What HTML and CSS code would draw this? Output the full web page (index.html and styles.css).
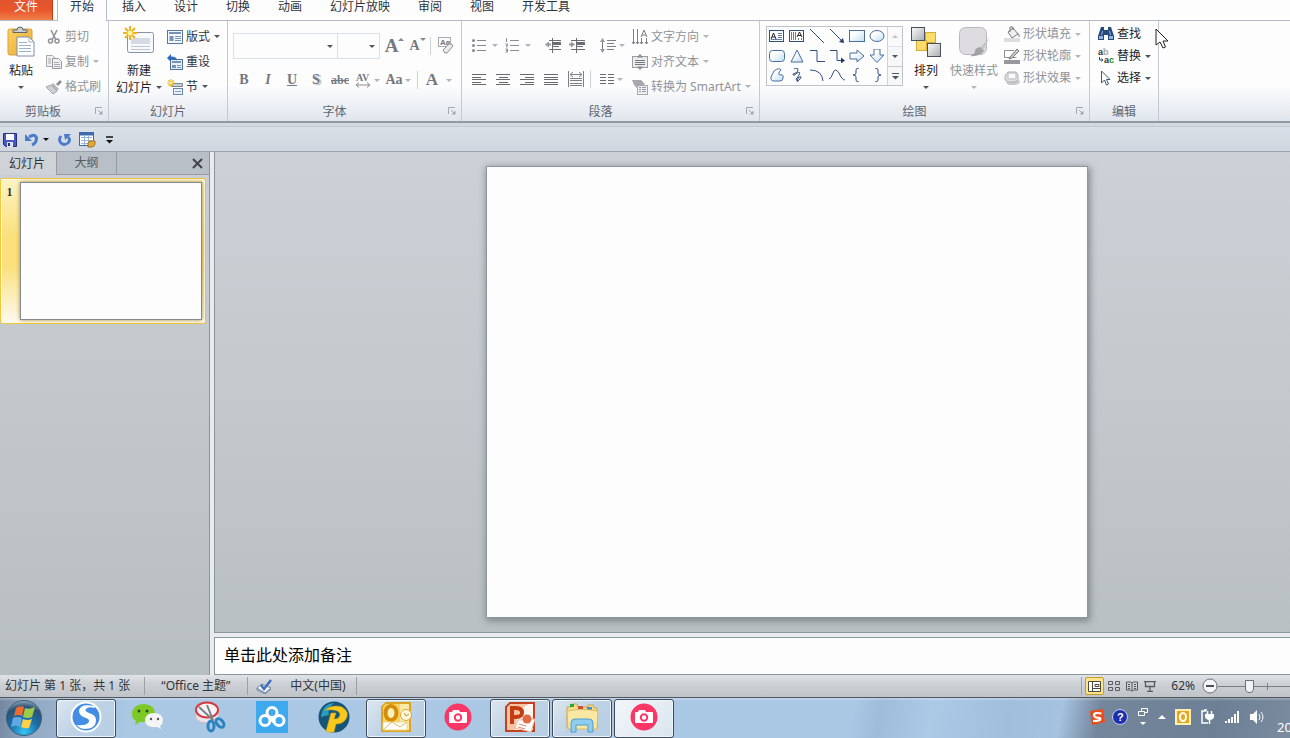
FILE: index.html
```
<!DOCTYPE html>
<html lang="zh-CN">
<head>
<meta charset="utf-8">
<title>PowerPoint</title>
<link rel="stylesheet" href="styles.css">
</head>
<body>
<svg class="defs" aria-hidden="true">
<defs>
<linearGradient id="gGray" x1="0" y1="0" x2="1" y2="1"><stop offset="0" stop-color="#fafafa"/><stop offset="1" stop-color="#a9adb3"/></linearGradient>
<linearGradient id="gPale" x1="0" y1="0" x2="1" y2="1"><stop offset="0.3" stop-color="#fff"/><stop offset="1" stop-color="#bfe0f3"/></linearGradient>
<linearGradient id="gGold" x1="0" y1="0" x2="1" y2="1"><stop offset="0" stop-color="#fbd25b"/><stop offset="1" stop-color="#e9a93a"/></linearGradient>
<radialGradient id="gOrb" cx="0.5" cy="0.9" r="0.9"><stop offset="0" stop-color="#35c5f5"/><stop offset="0.45" stop-color="#1c6ea8"/><stop offset="0.8" stop-color="#2b5273"/><stop offset="1" stop-color="#8fa9bd"/></radialGradient>
</defs>
<symbol id="launcher" viewBox="0 0 8 8"><path d="M.5 7V.5H7M3 3l3 3" fill="none" stroke="#a3a8af"/><path d="M7.5 3.5v4h-4z" fill="#a3a8af"/></symbol>
<symbol id="camera" viewBox="0 0 28 28"><circle cx="14" cy="14" r="13.5" fill="#fb3767"/><path d="M5 10q0-1 1-1h2l1-2h6l1 2h6q1 0 1 1v9q0 1-1 1H6q-1 0-1-1z" fill="#fff"/><circle cx="14" cy="14.500" r="3.2" fill="none" stroke="#fb3767" stroke-width="2"/></symbol>
<symbol id="spark" viewBox="0 0 14 14"><path d="M7 0v14M0 7h14M2 2l10 10M12 2L2 12" stroke="#f0b41c" stroke-width="2"/><circle cx="7" cy="7" r="2.5" fill="#fff3a0"/></symbol>
</svg>

<nav class="tabs">
<button class="tab file">文件</button>
<button class="tab active">开始</button>
<button class="tab">插入</button>
<button class="tab">设计</button>
<button class="tab">切换</button>
<button class="tab">动画</button>
<button class="tab">幻灯片放映</button>
<button class="tab">审阅</button>
<button class="tab">视图</button>
<button class="tab">开发工具</button>
</nav>

<div class="ribbon">
<!-- clipboard -->
<section class="group clipboard">
<div class="tools">
<button class="big">
<svg width="30" height="32" viewBox="0 0 30 32"><rect x="2" y="3" width="24" height="26" rx="2" fill="url(#gGold)" stroke="#d9a03c"/><path d="M7 6.500V4h4q0-3 3-3t3 3h4v2.500z" fill="#c9ced4" stroke="#5d646c"/><path d="M11 11h12l5 5v14H11z" fill="#fff" stroke="#7d8da3"/><path d="M23 11v5h5M13 16.500h8M13 19.500h12M13 22.500h12M13 25.500h12" fill="none" stroke="#9db1c9"/></svg>
<span>粘贴</span><i class="arr"></i></button>
<div class="col rows25">
<button class="small off"><svg width="16" height="16" viewBox="0 0 16 16"><path d="M5 1l5 10M11 1L6 11" stroke="#8f9297" stroke-width="1.6"/><circle cx="4.5" cy="12" r="2" fill="none" stroke="#8f9297" stroke-width="1.5"/><circle cx="11" cy="12" r="2" fill="none" stroke="#8f9297" stroke-width="1.5"/></svg>剪切</button>
<button class="small off"><svg width="16" height="16" viewBox="0 0 16 16"><path d="M.5 1.500h6l3 3v8h-9z" fill="#f0f0f2" stroke="#a7a9ae"/><path d="M6.500 4.500h6l3 3v7h-9z" fill="#f0f0f2" stroke="#94979d"/><path d="M2 5h3M2 7h3M2 9h3M8 8.500h5M8 10.500h6M8 12.500h6" stroke="#aaa"/></svg>复制<i class="arr"></i></button>
<button class="small off"><svg width="16" height="16" viewBox="0 0 16 16"><path d="M10 5l4-4 2 2-4 4z" fill="#8c8f94"/><path d="M7 4l6 6-2 2-6-6z" fill="#b4b6ba"/><path d="M5 6l6 6-4 3-7-7z" fill="#cfd0d3" stroke="#a2a4a8"/></svg>格式刷</button>
</div>
</div>
<h2>剪贴板</h2><button class="launch" aria-label="剪贴板选项"><svg width="8" height="8"><use href="#launcher"/></svg></button>
</section>

<!-- slides -->
<section class="group slides">
<div class="tools">
<button class="big">
<svg width="32" height="32" viewBox="0 0 32 32"><rect x="4.500" y="6.500" width="26" height="20" rx="2" fill="#f7f9fb" stroke="#8594a6"/><rect x="8" y="12" width="19" height="6" fill="#d4dbe4"/><path d="M8 20.500h19M8 23.500h19" stroke="#bcc7d4"/><use href="#spark" width="14" height="14"/></svg>
<span>新建</span><span>幻灯片<i class="arr"></i></span></button>
<div class="col rows25">
<button class="small"><svg width="16" height="16" viewBox="0 0 16 16"><rect x=".5" y="1.500" width="15" height="13" fill="#f4f8fc" stroke="#56769b"/><path d="M2 4h12" stroke="#7792b2" stroke-width="2"/><rect x="2.500" y="7" width="4" height="5" fill="#7792b2"/><path d="M8 7.500h6M8 9.500h6M8 11.500h6" stroke="#7792b2"/></svg>版式<i class="arr"></i></button>
<button class="small"><svg width="16" height="16" viewBox="0 0 16 16"><rect x="3.500" y="5.500" width="12" height="10" fill="#e8eff7" stroke="#4f6f96"/><path d="M5 8h9" stroke="#7792b2" stroke-width="2"/><rect x="5" y="11" width="4" height="3" fill="#7792b2"/><path d="M10 11.500h4M10 13.500h4" stroke="#7792b2"/><path d="M0 4l4-4v2.500q6 0 6 4-2-2-6-1.500V8z" fill="#2c6cbd"/></svg>重设</button>
<button class="small"><svg width="16" height="16" viewBox="0 0 16 16"><path d="M4.500 4.500h11v3h-11z" fill="#c9cdd4" stroke="#7c8794"/><rect x="6.500" y="9.500" width="9" height="6" fill="#e6eef6" stroke="#6c89aa"/><path d="M8 12.500h6" stroke="#8ba4c0"/><use href="#spark" width="8" height="8"/></svg>节<i class="arr"></i></button>
</div>
</div>
<h2>幻灯片</h2>
</section>

<!-- font -->
<section class="group font">
<div class="fontgrid">
<div class="line">
<select class="face" aria-label="字体"><option></option></select><select class="size" aria-label="字号"><option></option></select>
<button class="grow" aria-label="增大字号"><b>A</b><sup class="tri up"></sup></button>
<button class="shrink" aria-label="减小字号"><b>A</b><sup class="tri"></sup></button>
<i class="bar"></i>
<button aria-label="清除格式"><svg width="18" height="18" viewBox="0 0 18 18"><rect x="1.500" y=".500" width="12" height="9" fill="#fafafa" stroke="#aaaab0"/><text x="3" y="8" class="tiny">Aa</text><path d="M6 13l6-6q3-1 4 2l-6 7q-3 1-4-3z" fill="#eceaec" stroke="#8e8c92"/></svg></button>
</div>
<div class="line">
<button class="ch"><b>B</b></button>
<button class="ch"><b><em>I</em></b></button>
<button class="ch"><b><u>U</u></b></button>
<button class="ch shadow"><b>S</b></button>
<button class="ch strike"><b><s>abc</s></b></button>
<button class="ch av"><svg width="17" height="17" viewBox="0 0 17 17"><text x="1" y="9" class="avt">AV</text><path d="M1 13h14M4 10.500L1 13l3 2.500M12 10.500l3 2.500-3 2.500" fill="none" stroke="#888b90"/></svg><i class="arr"></i></button>
<button class="ch aa">Aa<i class="arr"></i></button>
<i class="bar"></i>
<button class="ch color"><b>A</b><i class="arr"></i></button>
</div>
</div>
<h2>字体</h2><button class="launch" aria-label="字体选项"><svg width="8" height="8"><use href="#launcher"/></svg></button>
</section>

<!-- paragraph -->
<section class="group para">
<div class="tools">
<div class="paragrid">
<div class="line">
<button class="ic"><svg width="15" height="15" viewBox="0 0 15 15"><path d="M5 2.500h9M5 7.500h9M5 12.500h9" stroke="#85888d"/><g fill="#85888d"><circle cx="1.500" cy="2.500" r="1.500"/><circle cx="1.500" cy="7.500" r="1.500"/><circle cx="1.500" cy="12.500" r="1.500"/></g></svg><i class="arr"></i></button>
<button class="ic"><svg width="15" height="15" viewBox="0 0 15 15"><path d="M5 2.500h9M5 7.500h9M5 12.500h9" stroke="#8a8d92"/><path d="M1 .5h.5V4M.5 6h2v1.500h-1V9h1M.5 11h2v3h-2M1 12.500h1" fill="none" stroke="#85888d"/></svg><i class="arr"></i></button>
<i class="bar"></i>
<button class="ic"><svg width="17" height="15" viewBox="0 0 17 15"><path d="M4 2.500h12M8 8.500h6M4 11.500h12M7.500 0v15" stroke="#6a6d72"/><path d="M8 4h8v3H8z" fill="#6a6d72"/><path d="M0 6.500l4-3v2h2v2H4v2z" fill="#96999e"/></svg></button>
<button class="ic"><svg width="17" height="15" viewBox="0 0 17 15"><path d="M2 2.500h14M8 8.500h6M2 11.500h14M7.500 0v15" stroke="#6a6d72"/><path d="M8 4h8v3H8z" fill="#6a6d72"/><path d="M6 6.500l-4-3v2H0v2h2v2z" fill="#96999e"/></svg></button>
<i class="bar"></i>
<button class="ic"><svg width="16" height="17" viewBox="0 0 16 17"><path d="M7 3.500h9M7 6.500h7M7 9.500h9M7 12.500h7M2.500 2v13" stroke="#7c7f84"/><path d="M0 5l2.500-4L5 5zM0 12l2.500 4L5 12z" fill="#96999e"/></svg><i class="arr"></i></button>
</div>
<div class="line">
<button class="al"><svg width="15" height="13" viewBox="0 0 15 13"><path d="M0 1.500h14M0 4.500h9M0 6.500h14M0 9.500h9M0 11.500h14" stroke="#66696e"/></svg></button>
<button class="al"><svg width="15" height="13" viewBox="0 0 15 13"><path d="M0 1.500h14M3 4.500h9M0 6.500h14M3 9.500h9M0 11.500h14" stroke="#66696e"/></svg></button>
<button class="al"><svg width="15" height="13" viewBox="0 0 15 13"><path d="M0 1.500h14M5 4.500h9M0 6.500h14M5 9.500h9M0 11.500h14" stroke="#66696e"/></svg></button>
<button class="al"><svg width="15" height="13" viewBox="0 0 15 13"><path d="M0 1.500h14M0 4.500h14M0 6.500h14M0 9.500h14M0 11.500h14" stroke="#66696e"/></svg></button>
<button class="al"><svg width="17" height="16" viewBox="0 0 17 16"><path d="M.5 0v16M15.500 0v16M2 7.500h12M2 9.500h12M2 12.500h12M2 14.500h12M3 3.500h10M5 1L2 3.500 5 6M11 1l3 2.500L11 6" fill="none" stroke="#7b7e83"/></svg></button>
<i class="bar"></i>
<button class="ic"><svg width="14" height="12" viewBox="0 0 14 12"><path d="M0 1.500h6M0 4.500h6M0 7.500h6M0 10.500h6M8 1.500h6M8 4.500h6M8 7.500h6M8 10.500h6" stroke="#66696e"/></svg><i class="arr"></i></button>
</div>
</div>
<div class="col rows25">
<button class="small off"><svg width="16" height="16" viewBox="0 0 16 16"><path d="M1.500 0v15M5.500 0v15M9.500 9v6M14.500 9v6M0 13l1.500 2L3 13M4 13l1.500 2L7 13M8 13l1.500 2 1.500-2M13 13l1.500 2 1.500-2M9 8l3-7 3 7M10 6h4" fill="none" stroke="#7b7e83"/></svg>文字方向<i class="arr"></i></button>
<button class="small off"><svg width="16" height="16" viewBox="0 0 16 16"><rect x=".5" y="2.500" width="15" height="11" fill="#ececee" stroke="#9b9da2"/><path d="M3 6.500h10M3 8.500h10M3 10.500h10" stroke="#77797e"/><path d="M5 3.500L8 0l3 3.500zM5 12.500L8 16l3-3.500z" fill="#85888e"/></svg>对齐文本<i class="arr"></i></button>
<button class="small off"><svg width="16" height="16" viewBox="0 0 16 16"><path d="M0 1h9l4 4-3 2 4 2H5L2 6z" fill="#a6a8ad"/><rect x="5.500" y="6.500" width="10" height="9" fill="#f0eff1" stroke="#a6a8ad"/><path d="M7 8.500h2M10 8.500h4M7 10.500h2M10 10.500h4M7 12.500h2M10 12.500h4" stroke="#95989e"/></svg>转换为 SmartArt<i class="arr"></i></button>
</div>
</div>
<h2>段落</h2><button class="launch" aria-label="段落选项"><svg width="8" height="8"><use href="#launcher"/></svg></button>
</section>

<!-- drawing -->
<section class="group draw">
<div class="tools">
<div class="gallery">
<div class="shapes">
<button><svg viewBox="0 0 16 14"><rect x=".5" y="1.500" width="14" height="11" fill="#fff" stroke="#2f4f7c"/><path d="M2 10l2.500-6L7 10M3 8h3" fill="none" stroke="#222" /><path d="M9 4.500h4M9 6.500h4M2 10.500h11M9 8.500h4" fill="none" stroke="#5f7fa8"/></svg></button>
<button><svg viewBox="0 0 16 14"><rect x=".5" y="1.500" width="14" height="11" fill="#fff" stroke="#2f4f7c"/><path d="M2.500 3v8M4.500 3v8M6.500 3v8M9.500 9v2M12.500 9v2" fill="none" stroke="#5f7fa8"/><path d="M8 8l2.500-5L13 8M9 6.500h3" fill="none" stroke="#222"/></svg></button>
<button><svg viewBox="0 0 16 14"><path d="M1 0l14 14" stroke="#2f4f7c"/></svg></button>
<button><svg viewBox="0 0 16 14"><path d="M1 0l12 12" stroke="#2f4f7c"/><path d="M15 14l-5-1 4-4z" fill="#1f3d68"/></svg></button>
<button><svg viewBox="0 0 16 14"><rect x=".5" y="1.500" width="15" height="11" fill="url(#gPale)" stroke="#4a6d9c"/></svg></button>
<button><svg viewBox="0 0 16 14"><ellipse cx="8" cy="7" rx="7" ry="5.500" fill="url(#gPale)" stroke="#4a6d9c"/></svg></button>
<button><svg viewBox="0 0 16 14"><rect x=".5" y="1.500" width="15" height="11" rx="3" fill="url(#gPale)" stroke="#4a6d9c"/></svg></button>
<button><svg viewBox="0 0 16 14"><path d="M8 1l6 12H2z" fill="url(#gPale)" stroke="#4a6d9c"/></svg></button>
<button><svg viewBox="0 0 16 14"><path d="M1 1.500h7v11h8" fill="none" stroke="#2f4f7c"/></svg></button>
<button><svg viewBox="0 0 16 14"><path d="M1 1.500h7v10h6" fill="none" stroke="#2f4f7c"/><path d="M12 8.500l4 3-4 3z" fill="#1f3d68"/></svg></button>
<button><svg viewBox="0 0 16 14"><path d="M1 4h7V1l7 6-7 6v-3H1z" fill="url(#gPale)" stroke="#4a6d9c"/></svg></button>
<button><svg viewBox="0 0 16 14"><path d="M5 0h6v6h4l-7 7.500L1 6h4z" fill="url(#gPale)" stroke="#4a6d9c"/></svg></button>
<button><svg viewBox="0 0 16 14"><path d="M2 9l3-6q5-4 7-1-4 4-1 5 4-1 3 3 0 3-3 3H4q-3-1-2-4z" fill="url(#gPale)" stroke="#4a6d9c"/></svg></button>
<button><svg viewBox="0 0 16 14"><path d="M5 1q4-2 4 1t-5 4q0 3 4-1 4-2 2 2T7 11q1 4 4 0t-2-1q-1 4 0 4" fill="none" stroke="#2f4f7c"/></svg></button>
<button><svg viewBox="0 0 16 14"><path d="M1 2q12 0 13 11" fill="none" stroke="#2f4f7c"/></svg></button>
<button><svg viewBox="0 0 16 14"><path d="M0 11q2 0 4-6t6 0q3 7 6 7" fill="none" stroke="#2f4f7c"/></svg></button>
<button><svg viewBox="0 0 16 14"><path d="M10 0Q7 0 7 2v3q0 2-3 2 3 0 3 2v3q0 2 3 2" fill="none" stroke="#2f4f7c"/></svg></button>
<button><svg viewBox="0 0 16 14"><path d="M6 0q3 0 3 2v3q0 2 3 2-3 0-3 2v3q0 2-3 2" fill="none" stroke="#2f4f7c"/></svg></button>
</div>
<div class="scroll">
<button class="dim" aria-label="上"><i class="tri up"></i></button>
<button aria-label="下"><i class="arr"></i></button>
<button class="more" aria-label="更多"><svg width="7" height="7" viewBox="0 0 7 7"><path d="M0 .5h7" stroke="#50555c"/><path d="M0 3h7L3.500 6.500z" fill="#50555c"/></svg></button>
</div>
</div>
<button class="big arrange">
<svg width="32" height="32" viewBox="0 0 32 32"><rect x="15.500" y="6.500" width="10" height="10" fill="#fbdc67" stroke="#d6a93a"/><rect x="6.500" y="14.500" width="10" height="10" fill="#fbdc67" stroke="#d6a93a"/><rect x="1.500" y="1.500" width="13" height="13" fill="url(#gGray)" stroke="#47505c"/><rect x="17.500" y="17.500" width="13" height="13" fill="url(#gGray)" stroke="#47505c"/></svg>
<span>排列</span><i class="arr"></i></button>
<button class="big off quick">
<svg width="32" height="32" viewBox="0 0 32 32"><rect x="1.500" y="1.500" width="27" height="27" rx="6" fill="#dedce0" stroke="#bab8be"/><path d="M31 12L22 22l3 3z" fill="#c6c3c8"/><path d="M22 21l4 4q-4 6-14 5 5-2 5-5t5-4z" fill="#a4a1a7"/></svg>
<span>快速样式</span><i class="arr"></i></button>
<div class="col rows22">
<button class="small off"><svg width="16" height="16" viewBox="0 0 16 16"><path d="M4 6l5-4 5 6-6 4z" fill="#eee" stroke="#77797e"/><path d="M6 6V1h3v3M13 7q3 1 2 4" fill="none" stroke="#77797e"/><path d="M0 12h16v4H0z" fill="#dcdde0"/></svg>形状填充<i class="arr"></i></button>
<button class="small off"><svg width="16" height="16" viewBox="0 0 16 16"><path d="M10 2.500H.5v7h12" fill="none" stroke="#8e9095"/><path d="M6 9l7-8 2 2-7 7-3 1z" fill="#c9cacc" stroke="#77797e"/><path d="M0 12h16v4H0z" fill="#97999e"/></svg>形状轮廓<i class="arr"></i></button>
<button class="small off"><svg width="16" height="16" viewBox="0 0 16 16"><path d="M4 10h11l1 3-4 2H5l-3-2z" fill="#c9cacd"/><path d="M1 6l3-4h8l2 3v5l-3 2H4l-3-2z" fill="#dfdfe2" stroke="#aeb0b4"/><rect x="4" y="3" width="8" height="6" rx="1" fill="#f9f9fa" stroke="#bbb"/></svg>形状效果<i class="arr"></i></button>
</div>
</div>
<h2>绘图</h2><button class="launch" aria-label="绘图选项"><svg width="8" height="8"><use href="#launcher"/></svg></button>
</section>

<!-- editing -->
<section class="group edit">
<div class="tools">
<div class="col rows22">
<button class="small"><svg width="16" height="16" viewBox="0 0 16 16"><path d="M3 1h3v3h4V1h3l3 9v4h-6V9H6v5H0v-4z" fill="#28497c"/><path d="M1 10h4v3H1zM11 10h4v3h-4zM4 5l-1 4h1l1-4zM11 5l1 4h1l-1-4z" fill="#8fb3e0"/></svg>查找</button>
<button class="small"><svg width="16" height="16" viewBox="0 0 16 16"><text x="0" y="7" class="rep">a<tspan fill="#a5a5a5">b</tspan></text><text x="6" y="15" class="rep">a<tspan fill="#178a17">c</tspan></text><path d="M1.500 9v3H5M3.500 10.500L5 12l-1.500 1.500" fill="none" stroke="#28497c"/></svg>替换<i class="arr"></i></button>
<button class="small"><svg width="16" height="16" viewBox="0 0 16 16"><path d="M3.500 1v12l3-3 2 5 2-1-2-4.500h3.500z" fill="#fff" stroke="#3f5677"/></svg>选择<i class="arr"></i></button>
</div>
</div>
<h2>编辑</h2>
</section>
</div>

<div class="qat">
<button aria-label="保存"><svg width="14" height="14" viewBox="0 0 14 14"><path d="M.5.500h13v13h-11l-2-2z" fill="#4a57c4" stroke="#27307c"/><rect x="3" y="1" width="8" height="6" fill="#fff"/><rect x="4" y="9" width="6" height="5" fill="#dfe4f2"/><rect x="5" y="10" width="2" height="3" fill="#222c70"/></svg></button>
<button class="undo" aria-label="撤消"><svg width="14" height="14" viewBox="0 0 14 14"><path d="M4 4q6-4 7.500 1 0 5-4.500 7" fill="none" stroke="#4a7bcb" stroke-width="3"/><path d="M0 1v7h7z" fill="#4a7bcb"/></svg><i class="arr"></i></button>
<button class="redo" aria-label="重复"><svg width="14" height="14" viewBox="0 0 14 14"><path d="M3 3q-3 4 0 7t7 0q3-3 0-6" fill="none" stroke="#4a7bcb" stroke-width="2.800"/><path d="M6 1h7L7 7z" fill="#4a7bcb"/></svg></button>
<button aria-label="表格"><svg width="17" height="16" viewBox="0 0 17 16"><rect x=".5" y=".500" width="14" height="13" fill="#fff" stroke="#3e6bb0"/><path d="M0 2h15" stroke="#3e6bb0" stroke-width="3"/><path d="M2 5.500h11M2 8.500h11M2 11.500h8M5.500 4v9M9.500 4v9" stroke="#9db5d6"/><path d="M9 11q0-2 3-2h4v3q-1 3-3 3H9z" fill="#e0a93b" stroke="#a4741c"/></svg></button>
<button class="custom" aria-label="自定义快速访问工具栏"><svg width="7" height="8" viewBox="0 0 7 8"><path d="M0 1h7" stroke="#111" stroke-width="1.500"/><path d="M0 4h7L3.500 7.500z" fill="#111"/></svg></button>
</div>

<main>
<aside>
<div class="panetabs"><button class="on">幻灯片</button><button>大纲</button><button class="close" aria-label="关闭"><svg width="11" height="11" viewBox="0 0 11 11"><path d="M1 1l9 9M10 1l-9 9" stroke="#3f444a" stroke-width="2"/></svg></button></div>
<button class="thumb"><span>1</span><span class="mini"></span></button>
</aside>
<div class="work">
<div class="stage"><div class="slide"></div></div>
<textarea class="notes" aria-label="备注">单击此处添加备注</textarea>
</div>
</main>

<footer class="status">
<span class="cell">幻灯片 第 1 张，共 1 张</span>
<span class="cell theme">“Office 主题”</span>
<button class="cell lang"><svg width="17" height="15" viewBox="0 0 17 15"><path d="M1 9l5-4 9 4-6 5z" fill="#f5f8fc" stroke="#7286a3"/><path d="M1 9v2l8 4 6-5" fill="none" stroke="#7286a3"/><path d="M5 6l3 4 7-9" fill="none" stroke="#3f6fc0" stroke-width="2.500"/></svg>中文(中国)</button>
<div class="views">
<button class="on" aria-label="普通视图"><svg width="13" height="11" viewBox="0 0 13 11"><path d="M.5.500h12v10H.5zM4.500.500v10M4.500 7.500h8M7 3.500h4v2H7z" fill="#fff" stroke="#4c4a3e"/></svg></button>
<button aria-label="幻灯片浏览"><svg width="12" height="11" viewBox="0 0 12 11"><path d="M.5.500h4v3h-4zM7.500.500h4v3h-4zM.5 6.500h4v3h-4zM7.500 6.500h4v3h-4z" fill="none" stroke="#585b60"/></svg></button>
<button aria-label="阅读视图"><svg width="12" height="11" viewBox="0 0 12 11"><path d="M.5 1h4l1.500 1 1.500-1h4v8h-4L6 10.500 4.500 9h-4zM6 2v8M2 3.500h2M2 5.500h2M2 7.500h2M8 3.500h2M8 5.500h2M8 7.500h2" fill="none" stroke="#585b60"/></svg></button>
<button aria-label="幻灯片放映"><svg width="12" height="11" viewBox="0 0 12 11"><path d="M0 .5h12M1.500.500v5h9v-5M6 6v4M3 10.500h6" fill="none" stroke="#585b60" stroke-width="1.300"/></svg></button>
</div>
<button class="pct">62%</button>
<button class="minus" aria-label="缩小"><svg width="16" height="16" viewBox="0 0 16 16"><circle cx="8" cy="8" r="7" fill="#f4f5f6" stroke="#6c7076"/><path d="M4 8h8" stroke="#4c5056" stroke-width="2"/></svg></button>
<input class="zoom" type="range" min="0" max="100" value="43" aria-label="显示比例">
</footer>

<div class="taskbar">
<button class="start" aria-label="开始"><svg width="38" height="38" viewBox="0 0 38 38"><circle cx="19" cy="19" r="17.500" fill="url(#gOrb)" stroke="#3f5f7a"/><path d="M11 9q4-3 8-1l-2 9q-4-2-8 0z" fill="#ee6a31"/><path d="M20 9q4 2 10-1l-3 10q-4 2-9 0z" fill="#9ccb4a"/><path d="M8 19q4-2 9 0l-2 9q-4-3-9 0z" fill="#62a9e4"/><path d="M18 20q4 2 9 0l-3 9q-4 1-8-1z" fill="#fbd14a"/></svg></button>
<button class="app open"><svg width="32" height="32" viewBox="0 0 32 32"><circle cx="16" cy="16" r="15.500" fill="#fff"/><circle cx="16" cy="16" r="13.500" fill="#448de4"/><path d="M24 5Q10 2 9 10q0 5 7 7 5 2 2 5-3 3-12 2 3 3 8 4 12 0 12-9 0-5-7-7-5-2-3-4 2-3 9-1z" fill="#fff"/></svg></button>
<button class="app"><svg width="34" height="30" viewBox="0 0 34 30"><path d="M13 2C6 2 1 6 1 12q0 5 4 7l-1 4 5-3h4q11-1 11-9T13 2z" fill="#7cc928"/><circle cx="8" cy="9" r="1.500" fill="#304d12"/><circle cx="16" cy="9" r="1.500" fill="#304d12"/><path d="M23 11q9 0 9 8 0 3-3 5l1 3-4-2q-11 1-12-6 0-8 9-8z" fill="#f4f4f4"/><circle cx="20" cy="17" r="1.200" fill="#555"/><circle cx="27" cy="17" r="1.200" fill="#555"/></svg></button>
<button class="app"><svg width="32" height="32" viewBox="0 0 32 32"><path d="M2 9v9q9 8 22-1V8z" fill="#e9e4ea" stroke="#c9c2cc"/><ellipse cx="13" cy="9" rx="11" ry="7.500" fill="#f5f3f6" stroke="#d9383e" stroke-width="2"/><path d="M5 6l14 13M13 4l6 15" stroke="#7b7f86" stroke-width="2"/><ellipse cx="17" cy="25" rx="3" ry="5" fill="none" stroke="#2b84bd" stroke-width="3"/><ellipse cx="26" cy="22" rx="3" ry="5" fill="none" stroke="#2b84bd" stroke-width="3" transform="rotate(-40 26 22)"/></svg></button>
<button class="app"><svg width="32" height="32" viewBox="0 0 32 32"><rect width="32" height="32" fill="#3fa9f0"/><g fill="none" stroke="#fff" stroke-width="3"><circle cx="16" cy="11.500" r="5"/><circle cx="9" cy="19.500" r="5"/><circle cx="23" cy="19.500" r="5"/></g><path d="M13 16l6 6" stroke="#fff" stroke-width="3"/></svg></button>
<button class="app"><svg width="32" height="32" viewBox="0 0 32 32"><circle cx="16" cy="16" r="15.500" fill="#175577"/><path d="M3 16Q4 3 16 2q-7 6-5 12z" fill="#2b9cbb"/><path d="M7 9q8-6 17-3 8 5 4 12-3 5-10 5l-2 8q-5 1-8-1l5-18h5l-2 6q6 0 6-5-1-5-15-4z" fill="#f8c81c" stroke="#d9a010" stroke-width=".5"/></svg></button>
<button class="app open"><svg width="32" height="32" viewBox="0 0 32 32"><path d="M6 2h24v28H2V6z" fill="#fbe9a8" stroke="#dba422" stroke-width="2"/><path d="M3 7q1-4 5-4h12v18H3z" fill="#f7d45e"/><ellipse cx="11" cy="12" rx="5.500" ry="7" fill="#fff1b8" stroke="#d58c0a" stroke-width="4"/><path d="M3 21h24v8H3z" fill="#fff" stroke="#ecd48b"/><path d="M3 29l9-8 8 5 7-5" fill="none" stroke="#e0bd5c"/><circle cx="26" cy="14" r="5.500" fill="#fff8dd" stroke="#dca73c"/><path d="M24 12l2 3 3-2" fill="none" stroke="#c98d1e"/></svg></button>
<button class="app"><svg width="28" height="28"><use href="#camera"/></svg></button>
<button class="app open"><svg width="32" height="32" viewBox="0 0 32 32"><path d="M6 2h24v28H2V6z" fill="#fdf4ec" stroke="#c5401c" stroke-width="2"/><path d="M3 8q1-5 6-5h16q-12 4-14 26H3z" fill="#f7c3a2"/><path d="M8 23V7h4q6 0 6 4.500T12 16H8" fill="none" stroke="#c43b14" stroke-width="4"/><path d="M14 19l17-1-4 13-16-4z" fill="#fff" stroke="#e3b6a2"/><circle cx="23" cy="18" r="4.500" fill="#e06a43"/><path d="M15 23l7 2M14 26l7 2" stroke="#d98b6d"/></svg></button>
<button class="app open"><svg width="34" height="32" viewBox="0 0 34 32"><path d="M2 6h4l1-3h5l1 3h10V4h5l1 3h3v20H2z" fill="#f4dd8b" stroke="#c9a54a"/><path d="M5 3h4v3H5z" fill="#22a83c"/><path d="M13 5h5v3h-5z" fill="#d84a36"/><path d="M22 6h5v3h-5z" fill="#3c8fd6"/><path d="M2 10q14-3 31 0l-1 18H3z" fill="#f9e7a4" stroke="#d9b964"/><path d="M6 31v-9q0-4 4-4h14q4 0 4 4v9h-5v-7H11v7z" fill="#8fcdee" stroke="#4e9dcb"/></svg></button>
<button class="app open bright"><svg width="28" height="28"><use href="#camera"/></svg></button>

<div class="tray">
<svg width="16" height="16" viewBox="0 0 16 16"><path d="M1 2l13-2 2 13-13 3z" fill="#ee4b1b"/><path d="M12.500 4.500Q5 3 5 6t6 3q2 3-7 3" fill="none" stroke="#fff" stroke-width="2.200"/></svg>
<svg width="16" height="16" viewBox="0 0 16 16"><circle cx="8" cy="8" r="7.500" fill="#1c2fb0" stroke="#c4cdea"/><text x="5" y="12" class="q">?</text></svg>
<svg width="12" height="18" viewBox="0 0 12 18"><path d="M4.500 3V.500h6v4H8M1.500 3.500h6v4h-6z" fill="none" stroke="#fff"/><path d="M3 14h6l-3 3z" fill="#fff"/></svg>
<svg width="8" height="6" viewBox="0 0 8 6"><path d="M0 5l4-4 4 4z" fill="#fff"/></svg>
<svg width="16" height="16" viewBox="0 0 16 16"><rect x="1" y="1" width="14" height="14" fill="#e9a91e" stroke="#fff0b5" stroke-width="2"/><ellipse cx="8" cy="8" rx="3" ry="4" fill="none" stroke="#fff" stroke-width="2"/></svg>
<svg width="15" height="16" viewBox="0 0 15 16"><path d="M6 2H2v12h6M4 1h3" fill="none" stroke="#fff" stroke-width="1.500"/><path d="M7.500 2v3M11.500 2v3M9.500 10v5" stroke="#fff" stroke-width="1.500"/><path d="M5 5h9v3q-1 3-4.500 3T5 8z" fill="#fff"/></svg>
<svg width="16" height="14" viewBox="0 0 16 14"><path d="M1 11h2v2H1zM4 9h2v4H4zM7 7h2v6H7zM10 4h2v9h-2zM13 1h2v12h-2z" fill="#fff"/></svg>
<svg width="16" height="16" viewBox="0 0 16 16"><path d="M1 5h3l4-4v14l-4-4H1z" fill="#fff"/><path d="M10 5q2 3 0 6M12 3q4 5 0 10" fill="none" stroke="#fff"/></svg>
<span class="clock">20</span>
</div>
</div>

<svg class="cursor" width="14" height="22" viewBox="0 0 14 22"><path d="M1 1v16l4-3 3 6 2.500-1L8 13h5z" fill="#fff" stroke="#222"/></svg>
</body>
</html>
```

FILE: styles.css
```
* {box-sizing:border-box;}
html, body {height:100%;}
body {margin:0;display:flex;flex-direction:column;overflow:hidden;background:#fdfdfe;color:#30343a;font-family:"Noto Sans","Noto Sans CJK SC",sans-serif;font-size:12px;line-height:16px;}
button {font:inherit;color:inherit;background:none;border:0;margin:0;padding:0;white-space:nowrap;}
svg {display:block;flex:none;}
h2 {margin:0;font-size:12px;font-weight:normal;line-height:18px;height:18px;text-align:center;color:#5f6670;}
.defs {position:absolute;width:0;height:0;}

.arr {display:inline-block;flex:none;width:0;height:0;border:3px solid transparent;border-top-color:#50555c;border-bottom:0;}
.off .arr, .para .arr, .font button .arr {border-top-color:#b0b3b8;}
.tri {display:inline-block;width:0;height:0;border:3px solid transparent;border-top-color:#85888e;border-bottom:0;}
.tri.up {border-top:0;border-bottom:3px solid #85888e;}
.bar {width:1px;height:18px;background:#cdd3da;}

/* tabs */
.tabs {display:flex;flex:none;height:21px;border-bottom:1px solid #b4bcc8;}
.tab {height:20px;padding:0 14px 6px;line-height:14px;}
.file {width:53px;margin-right:4px;padding:0 0 6px;color:#fff;background:linear-gradient(#e2532f,#e8562a 50%,#f0804a);border-right:1px solid #c23c10;}
.tab.active {height:21px;width:50px;padding:0 0 7px;margin-right:1px;background:#fdfdfe;border:solid #b4bcc8;border-width:0 1px;}

/* ribbon */
.ribbon {display:flex;flex:none;height:102px;background:linear-gradient(#fdfdfe,#fdfdfe 64%,#e0e6ed);border-bottom:2px solid #9299a4;}
.group {position:relative;flex:none;display:flex;flex-direction:column;justify-content:space-between;border-right:1px solid #c3cad3;}
.tools {display:flex;height:79px;padding-top:3px;}
.clipboard {width:109px;}
.clipboard h2 {padding-right:22px;}
.slides {width:119px;}
.font {width:234px;}
.font h2 {padding-right:20px;}
.para {width:298px;}
.para h2 {padding-right:20px;}
.draw {width:330px;}
.draw h2 {padding-right:20px;}
.edit {width:69px;}
.launch {position:absolute;right:5px;bottom:6px;}
.big {display:flex;flex-direction:column;align-items:center;}
.big svg {margin:2px 0 4px;}
.big > .arr {margin-top:7px;}
.big span .arr {margin:0 0 3px 4px;}
.big span {line-height:17px;}
.big, .edit .small {color:#1e2227;}
.col {display:flex;flex-direction:column;}
.small {display:flex;align-items:center;gap:3px;}
.small .arr {margin-left:1px;}
.rows25 .small {height:25px;}
.rows22 .small {height:22px;}
.off, .big.off {color:#8f9398;}
.clipboard .big {width:42px;margin-right:4px;}
.slides .big {width:46px;margin:0 5px 0 7px;}

/* font group */
.line {display:flex;align-items:center;height:34px;}
.fontgrid {padding:8px 0 0 4px;}
select {appearance:none;height:26px;border:1px solid #d7e1ec;border-radius:0;background:#fdfdfe url("data:image/svg+xml,%3Csvg xmlns='http://www.w3.org/2000/svg' width='6' height='3'%3E%3Cpath d='M0 0h6L3 3z' fill='%2350555c'/%3E%3C/svg%3E") no-repeat right 4px center;}
.face {width:105px;margin-left:1px;}
.size {width:43px;margin-left:-1px;}
.font b, .ch {font-family:"Liberation Serif",serif;color:#75787e;}
.grow, .shrink {display:flex;width:23px;justify-content:center;}
.grow {margin-left:3px;}
.grow b {font-size:19px;}
.shrink b {font-size:14px;}
.font .line:first-child .bar {margin:0 6px 0 1px;}
.ch {width:24px;font-size:14px;}
.shadow b {text-shadow:2px 1px 1px #b5b7bb;}
.strike {font-size:12px;}
.av, .aa, .color {display:flex;align-items:center;justify-content:center;gap:2px;}
.av {width:30px;}
.aa {width:32px;font-weight:bold;}
.font .line + .line .bar {margin:0 7px 0 3px;}
.color {width:28px;gap:8px;}
.color b {font-size:17px;}
.tiny {font:bold 8px "Liberation Sans",sans-serif;fill:#77797e;}
.avt {font:bold 10px "Liberation Serif",serif;fill:#75787e;}

/* paragraph group */
.paragrid {width:161px;margin-right:9px;padding:4px 0 0 10px;}
.paragrid .line {gap:9px;}
.paragrid .line:first-child {gap:7px;}
.ic {display:flex;align-items:center;gap:5px;}
.paragrid .ic:last-child {gap:3px;}
.al + .bar {margin-left:-4px;}

/* drawing group */
.gallery {display:flex;width:137px;height:60px;margin:2px 8px 0 6px;border:1px solid #c0c4ca;}
.shapes {display:grid;flex:1;grid-template-columns:repeat(6,20px);align-content:space-between;padding:0 0 1px;}
.shapes button {height:18px;padding:2px;}
.shapes svg {width:16px;height:14px;}
.scroll {width:15px;border-left:1px solid #cfd3d8;}
.scroll button {display:flex;align-items:center;justify-content:center;width:100%;height:20px;border-bottom:1px solid #c6cad0;background:#f6f7f9;}
.scroll .dim {opacity:.5;}
.scroll .more {height:18px;border-bottom:0;}
.arrange {width:30px;}
.quick {width:50px;margin:0 5px 0 8px;}
.draw .rows22, .edit .rows22 {margin-top:-1px;}
.edit .col {padding-left:8px;}
.rep {font:bold 9px "Liberation Sans",sans-serif;fill:#333;}

/* quick access toolbar */
.qat {display:flex;flex:none;align-items:center;gap:7px;height:29px;padding:2px 3px 0;border-top:3px solid #d3d9e1;border-bottom:1px solid #9aa2ad;background:linear-gradient(#a8b0bb,#dae0e8 1px,#cfd6df);}
.undo {display:flex;align-items:center;gap:4px;margin-left:1px;}
.qat .arr {border-top-color:#111;}
.redo {margin-left:2px;}
.custom {margin-left:3px;}

/* work area */
main {display:flex;flex:1;min-height:0;background:#e9ecef;}
aside {width:210px;flex:none;background:linear-gradient(#cbcfd5,#b7bec1);border-right:1px solid #8d949c;}
.panetabs {display:flex;height:23px;}
.panetabs button {width:60px;border:solid #959ca5;border-width:0 1px 1px 0;background:#b9bfc6;color:#555b63;}
.panetabs .on {width:57px;border-bottom:0;padding-right:2px;background:#cfd3d8;color:#30343a;}
.panetabs .close {display:flex;flex:1;align-items:center;justify-content:flex-end;padding-right:6px;border-right:0;}
.thumb {display:flex;width:206px;height:146px;margin-top:3px;padding:3px 3px 2px 2px;border:1px solid #f3c73d;border-radius:3px;background:linear-gradient(#fdf3c4,#fbe07c 40%,#fbe07c 60%,#fdfaf0);box-shadow:inset 0 0 0 1px #fffbe4;font-weight:bold;font-family:"Liberation Serif",serif;}
.thumb span:first-child {width:17px;padding-right:4px;text-align:center;line-height:20px;}
.mini {flex:1;height:138px;background:#fdfdfe;border:1px solid #85888e;box-shadow:0 0 4px #a08a40;}
.work {flex:1;min-width:0;margin-left:4px;display:flex;flex-direction:column;}
.stage {display:flex;flex:1;min-height:0;justify-content:center;padding:15px 0 15px 68px;border:1px solid #8d949c;border-width:0 0 1px 1px;background:linear-gradient(#cdd1d7,#b9c0c3);}
.slide {aspect-ratio:4/3;height:100%;background:#fdfdfe;outline:1px solid #8f969c;box-shadow:1px 2px 7px 2px #7f868b;}
.notes {display:block;height:38px;margin-top:4px;padding:7px 9px;resize:none;border:1px solid #8d949c;border-right:0;border-radius:0;background:#fdfdfe;color:#000;font:16px/18px "Noto Sans CJK SC",sans-serif;outline:0;}

/* status bar */
.status {display:flex;flex:none;align-items:center;height:23px;background:linear-gradient(#dfe4e9,#cdd1d5 40%,#c0c4c8);border-bottom:1px solid #50575f;}
.cell {display:flex;align-items:center;height:18px;padding:0 14px 0 5px;border-right:1px solid #9da2a8;}
.cell.theme {padding:0 17px 0 16px;}
.cell.lang {gap:17px;padding:0 10px 0 8px;}
.views {display:flex;align-items:center;height:18px;margin-left:auto;padding-left:3px;border-left:1px solid #9da2a8;}
.views button {display:flex;align-items:center;justify-content:center;width:18px;height:18px;}
.views .on {width:19px;margin-right:1px;border:1px solid #c99b2c;border-radius:2px;background:#fce48b;}
.pct {margin-left:12px;}
.minus {margin-left:7px;}
.zoom {appearance:none;width:72px;height:16px;margin:0;background:linear-gradient(#7d8187,#7d8187) center/100% 1px no-repeat,linear-gradient(#7d8187,#7d8187) 49px 5px/1px 7px no-repeat;}
.zoom::-webkit-slider-thumb {appearance:none;width:9px;height:13px;border:1px solid #6c7076;border-radius:1px 1px 5px 5px;background:#f2f3f5;}

/* taskbar */
.taskbar {display:flex;flex:none;align-items:center;gap:2px;height:40px;background:linear-gradient(#ffffff50,#ffffff00 3px),linear-gradient(100deg,#7487a0,#93a9c4 3%,#aac7e4 10%,#aac7e4 66%,#9fbddb 68%,#acc9e6 72%,#a1bfdd 78%,#a5c2e0 82%,#74869c 85%,#6c7f94 94%,#7a8b9f);}
.start {width:54px;padding-left:5px;}
.app {display:flex;align-items:center;justify-content:center;width:60px;height:39px;padding-bottom:2px;}
.app.open {border:1px solid #3e4b5a;border-radius:3px;background:linear-gradient(135deg,#dde6ef,#bed2e5 50%,#b6cde3);box-shadow:inset 0 0 0 1px #eff4f9;}
.app.bright {background:linear-gradient(135deg,#f3f6f9,#d9e5ef);}
.tray {display:flex;align-items:center;margin-left:auto;padding-bottom:2px;gap:9px;width:201px;color:#fff;}
.tray svg:nth-child(2) {margin-left:-2px;}
.clock {margin:20px 0 0 3px;font-size:13px;}
.q {font:bold 11px "Liberation Sans",sans-serif;fill:#fff;}

.cursor {position:absolute;left:1155px;top:28px;}
```
